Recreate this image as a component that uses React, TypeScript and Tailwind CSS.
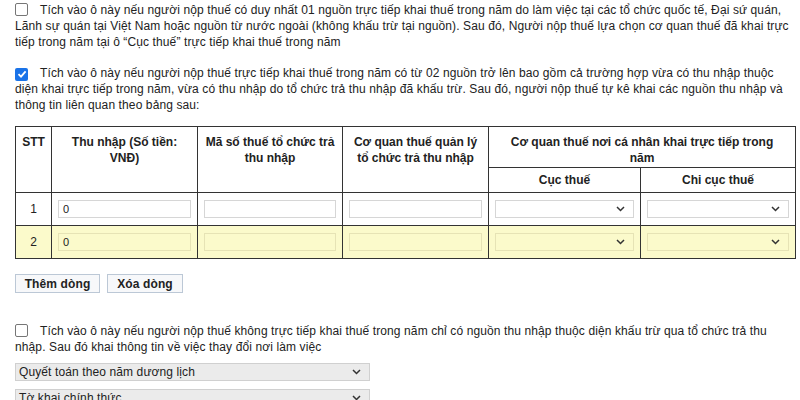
import React from 'react';

const Box: React.FC<{ checked?: boolean }> = ({ checked }) =>
  checked ? (
    <span className="inline-flex align-[-2px] w-[13px] h-[13px] mr-[12px] rounded-[2px] bg-[#1a73e8] items-center justify-center">
      <svg width="10" height="10" viewBox="0 0 10 10">
        <path d="M1.5 5.2 L4 7.6 L8.6 2.4" stroke="#fff" strokeWidth="1.8" fill="none" />
      </svg>
    </span>
  ) : (
    <span className="inline-block align-[-2px] w-[13px] h-[13px] mr-[12px] rounded-[2px] border border-[#767676] bg-white" />
  );

const Chevron = () => (
  <svg width="9" height="6" viewBox="0 0 9 6" className="shrink-0">
    <path d="M1 1 L4.5 4.5 L8 1" stroke="#333" strokeWidth="1.5" fill="none" />
  </svg>
);

const Field: React.FC<{ value?: string; yellow?: boolean }> = ({ value, yellow }) => (
  <div
    className={`h-[18px] border ${yellow ? 'border-[#e6e3b5] bg-[#fbfacb]' : 'border-[#d6d6d6] bg-white'} px-[4px] flex items-center text-[11px] text-[#222]`}
  >
    {value}
  </div>
);

const Select: React.FC<{ yellow?: boolean }> = ({ yellow }) => (
  <div
    className={`h-[18px] border ${yellow ? 'border-[#e6e3b5] bg-[#fbfacb]' : 'border-[#d6d6d6] bg-white'} pr-[8px] flex items-center justify-end`}
  >
    <Chevron />
  </div>
);

const rows = [1, 2];

export default function App() {
  return (
    <div className="w-[800px] h-[400px] overflow-hidden bg-white text-[12px] leading-[16px] tracking-[0.11px] text-[#222] font-['Liberation_Sans',Arial,sans-serif]">
      <div className="pl-[15px] pr-[5px] pt-[2px]">
        <p>
          <Box />
          Tích vào ô này nếu người nộp thuế có duy nhất 01 nguồn trực tiếp khai thuế trong năm do làm việc tại các tổ chức quốc tế, Đại sứ quán, Lãnh sự quán tại Việt Nam hoặc nguồn từ nước ngoài (không khấu trừ tại nguồn). Sau đó, Người nộp thuế lựa chọn cơ quan thuế đã khai trực tiếp trong năm tại ô “Cục thuế” trực tiếp khai thuế trong năm
        </p>
        <p className="mt-[15px]">
          <Box checked />
          Tích vào ô này nếu người nộp thuế trực tiếp khai thuế trong năm có từ 02 nguồn trở lên bao gồm cả trường hợp vừa có thu nhập thuộc diện khai trực tiếp trong năm, vừa có thu nhập do tổ chức trả thu nhập đã khấu trừ. Sau đó, người nộp thuế tự kê khai các nguồn thu nhập và thông tin liên quan theo bảng sau:
        </p>

        <table className="mt-[13px] w-[780px] border-collapse table-fixed tracking-normal">
          <colgroup>
            <col className="w-[36px]" />
            <col className="w-[146px]" />
            <col className="w-[145px]" />
            <col className="w-[146px]" />
            <col className="w-[152px]" />
            <col className="w-[155px]" />
          </colgroup>
          <thead>
            <tr className="h-[41px]">
              <th rowSpan={2} className="border border-[#333] align-top pt-[7px] px-[4px] font-bold">STT</th>
              <th rowSpan={2} className="border border-[#333] align-top pt-[7px] px-[6px] font-bold">Thu nhập (Số tiền: VNĐ)</th>
              <th rowSpan={2} className="border border-[#333] align-top pt-[7px] px-[4px] font-bold">Mã số thuế tổ chức trả thu nhập</th>
              <th rowSpan={2} className="border border-[#333] align-top pt-[7px] px-[4px] font-bold">Cơ quan thuế quản lý tổ chức trả thu nhập</th>
              <th colSpan={2} className="border border-[#333] align-top pt-[7px] px-[8px] font-bold">Cơ quan thuế nơi cá nhân khai trực tiếp trong năm</th>
            </tr>
            <tr className="h-[25px]">
              <th className="border border-[#333] font-bold">Cục thuế</th>
              <th className="border border-[#333] font-bold">Chi cục thuế</th>
            </tr>
          </thead>
          <tbody>
            {rows.map((n) => {
              const y = n === 2;
              return (
                <tr key={n} className={`h-[33px] ${y ? 'bg-[#fbfacb]' : 'bg-white'}`}>
                  <td className="border border-[#333] text-center">{n}</td>
                  <td className="border border-[#333] px-[6px]"><Field value="0" yellow={y} /></td>
                  <td className="border border-[#333] px-[6px]"><Field yellow={y} /></td>
                  <td className="border border-[#333] px-[6px]"><Field yellow={y} /></td>
                  <td className="border border-[#333] px-[6px]"><Select yellow={y} /></td>
                  <td className="border border-[#333] px-[6px]"><Select yellow={y} /></td>
                </tr>
              );
            })}
          </tbody>
        </table>

        <div className="mt-[15px] flex gap-[7px]">
          <button className="h-[19px] w-[85px] border border-[#bcc8d6] bg-[#f7f8fa] font-bold text-[12px] text-[#222]">Thêm dòng</button>
          <button className="h-[19px] w-[76px] border border-[#bcc8d6] bg-[#f7f8fa] font-bold text-[12px] text-[#222]">Xóa dòng</button>
        </div>

        <p className="mt-[30px]">
          <Box />
          Tích vào ô này nếu người nộp thuế không trực tiếp khai thuế trong năm chỉ có nguồn thu nhập thuộc diện khấu trừ qua tổ chức trả thu nhập. Sau đó khai thông tin về việc thay đổi nơi làm việc
        </p>

        <div className="mt-[8px] w-[355px] h-[18px] border border-[#d0d0d0] bg-[#ebebeb] flex items-center justify-between pl-[3px] pr-[8px]">
          <span>Quyết toán theo năm dương lịch</span>
          <Chevron />
        </div>
        <div className="mt-[8px] w-[355px] h-[18px] border border-[#d0d0d0] bg-[#ebebeb] flex items-center justify-between pl-[3px] pr-[8px]">
          <span>Tờ khai chính thức</span>
          <Chevron />
        </div>
      </div>
    </div>
  );
}
